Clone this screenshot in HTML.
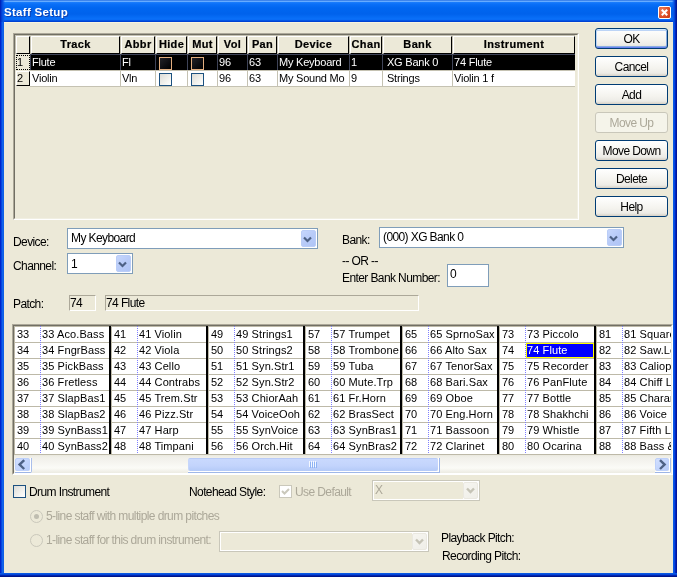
<!DOCTYPE html><html><head><meta charset="utf-8"><style>
*{margin:0;padding:0;box-sizing:border-box}
html,body{width:677px;height:577px;overflow:hidden;background:#ECE9D8}
body{position:relative;-webkit-font-smoothing:antialiased;font-family:"Liberation Sans",sans-serif;font-size:11px;color:#000;letter-spacing:-0.22px}
div{position:absolute}
.t{white-space:nowrap;line-height:13px}
.d{font-size:12px;letter-spacing:-0.6px}
.btn{font-size:12px;letter-spacing:-0.6px;border:1px solid #003C74;border-radius:3px;background:linear-gradient(#FFFFFF 0%,#F4F3EE 60%,#ECEBE6 85%,#D6D0C5 100%);text-align:center;line-height:19px;padding-top:1px}
.btnd{font-size:12px;letter-spacing:-0.6px;border:1px solid #C9C7BA;border-radius:3px;background:#F5F4EA;text-align:center;line-height:19px;padding-top:1px;color:#ACA899}
.combo{border:1px solid #7F9DB9;background:#fff}
.cbtn{border-radius:2px;background:linear-gradient(135deg,#C6D6FC 0%,#B8CBF8 50%,#AFC4F6 100%);border:1px solid #BACDF7}
.chk{border:1px solid #1C5180;background:linear-gradient(135deg,#DCDCD7 0%,#F2F2EE 60%,#FFFFFF 100%)}
.hdr{letter-spacing:0.35px;-webkit-text-stroke:0.2px #000;background:#ECE9D8;border-top:1px solid #fff;border-left:1px solid #fff;border-right:1px solid #000;border-bottom:1px solid #000;font-weight:bold;text-align:center;line-height:15px}
</style></head><body><div style="left:0;top:0;width:677px;height:577px;will-change:transform"><div style="left:0;top:0;width:677px;height:577px;background:#0831D9"></div>
<div style="left:0;top:0;width:677px;height:22px;background:linear-gradient(#3C84EC 0px,#3C84EC 1px,#66ACFF 1px,#66ACFF 2px,#1C7EFC 2px,#0A70F8 4px,#0066F0 8px,#0062EC 14px,#0468F2 16px,#0A70F8 19px,#0868F4 20px,#0044D6 21px,#0040D0 22px)"></div>
<div style="left:0;top:0;width:5px;height:22px;background:linear-gradient(90deg,#0018B0 0px,#0030C8 1px,#0048DC 2px,#0A54E4 3px,rgba(10,90,236,0) 5px)"></div>
<div style="left:672px;top:0;width:5px;height:22px;background:linear-gradient(90deg,rgba(10,90,236,0) 0px,#0A54E4 2px,#0038C8 3px,#0020A8 4px,#00148C 5px)"></div>
<div style="left:0;top:22px;width:4px;height:555px;background:linear-gradient(90deg,#001CC0 0px,#0030D8 1px,#0A5CE8 2px,#166AEE 3px,#0855DD 4px)"></div>
<div style="left:673px;top:22px;width:4px;height:555px;background:linear-gradient(90deg,#0855DD 0px,#0A5CE8 1px,#0030D8 2px,#001AA8 3px,#00138C 4px)"></div>
<div style="left:0;top:573px;width:677px;height:4px;background:linear-gradient(#0855DD 0px,#0A5CE8 1px,#0030C8 2px,#001A98 3px,#00107A 4px)"></div>
<div class="t" style="left:4px;top:4px;font-size:11.5px;font-weight:bold;color:#fff;line-height:16px;letter-spacing:0.3px;text-shadow:1px 1px 0 #1040B0">Staff Setup</div>
<div style="left:658px;top:6px;width:13px;height:13px;border:1px solid #fff;border-radius:2px;background:radial-gradient(circle at 30% 30%,#F0805A,#D8451F 70%,#C4380F)"></div>
<svg style="position:absolute;left:658px;top:6px" width="13" height="13" viewBox="0 0 13 13"><path d="M3.8 3.8 L9.2 9.2 M9.2 3.8 L3.8 9.2" stroke="#fff" stroke-width="2" stroke-linecap="butt"/></svg>
<div style="left:4px;top:22px;width:669px;height:551px;background:#ECE9D8;border-top:1px solid #F8F4E0"></div>
<div class="" style="left:13px;top:33px;width:566px;height:187px;border-top:1px solid #ACA899;border-left:1px solid #ACA899;border-right:1px solid #fff;border-bottom:1px solid #fff"></div>
<div class="" style="left:14px;top:34px;width:564px;height:185px;border-top:1px solid #716F64;border-left:1px solid #716F64;border-right:1px solid #F1EFE2;border-bottom:1px solid #F1EFE2;background:#ECE9D8"></div>
<div class="" style="left:15px;top:35px;width:560px;height:19px;background:#C5C2B2"></div>
<div class="hdr t" style="left:16px;top:36px;width:14px;height:18px;"></div>
<div class="hdr t" style="left:31px;top:36px;width:89px;height:18px;">Track</div>
<div class="hdr t" style="left:121px;top:36px;width:34px;height:18px;">Abbr</div>
<div class="hdr t" style="left:156px;top:36px;width:31px;height:18px;">Hide</div>
<div class="hdr t" style="left:188px;top:36px;width:29px;height:18px;">Mut</div>
<div class="hdr t" style="left:218px;top:36px;width:29px;height:18px;">Vol</div>
<div class="hdr t" style="left:248px;top:36px;width:29px;height:18px;">Pan</div>
<div class="hdr t" style="left:278px;top:36px;width:71px;height:18px;">Device</div>
<div class="hdr t" style="left:350px;top:36px;width:32px;height:18px;">Chan</div>
<div class="hdr t" style="left:383px;top:36px;width:69px;height:18px;">Bank</div>
<div class="hdr t" style="left:453px;top:36px;width:122px;height:18px;">Instrument</div>
<div class="" style="left:16px;top:54px;width:14px;height:16px;background:#ECE9D8"></div>
<div class="" style="left:16px;top:55px;width:14px;height:15px;border:1px dotted #000"></div>
<div class="t" style="left:17px;top:56px;">1</div>
<div class="" style="left:30px;top:54px;width:545px;height:16px;background:#000;border-top:1px solid #3F4458;border-left:1px solid #3F4458"></div>
<div class="t" style="left:32px;top:56px;color:#fff">Flute</div>
<div class="" style="left:120px;top:54px;width:1px;height:16px;background:#3F4458"></div>
<div class="t" style="left:122px;top:56px;color:#fff">Fl</div>
<div class="" style="left:155px;top:54px;width:1px;height:16px;background:#3F4458"></div>
<div class="chk" style="left:159px;top:57px;width:13px;height:13px;border-color:#E3AE7F;background:linear-gradient(135deg,#232328 0%,#0D0D11 60%,#000 100%)"></div>
<div class="" style="left:187px;top:54px;width:1px;height:16px;background:#3F4458"></div>
<div class="chk" style="left:191px;top:57px;width:13px;height:13px;border-color:#E3AE7F;background:linear-gradient(135deg,#232328 0%,#0D0D11 60%,#000 100%)"></div>
<div class="" style="left:217px;top:54px;width:1px;height:16px;background:#3F4458"></div>
<div class="t" style="left:219px;top:56px;color:#fff">96</div>
<div class="" style="left:247px;top:54px;width:1px;height:16px;background:#3F4458"></div>
<div class="t" style="left:249px;top:56px;color:#fff">63</div>
<div class="" style="left:277px;top:54px;width:1px;height:16px;background:#3F4458"></div>
<div class="t" style="left:279px;top:56px;color:#fff">My Keyboard</div>
<div class="" style="left:349px;top:54px;width:1px;height:16px;background:#3F4458"></div>
<div class="t" style="left:351px;top:56px;color:#fff">1</div>
<div class="" style="left:382px;top:54px;width:1px;height:16px;background:#3F4458"></div>
<div class="t" style="left:387px;top:56px;color:#fff">XG Bank 0</div>
<div class="" style="left:452px;top:54px;width:1px;height:16px;background:#3F4458"></div>
<div class="t" style="left:454px;top:56px;color:#fff">74 Flute</div>
<div class="" style="left:16px;top:71px;width:14px;height:15px;background:#ECE9D8;border-top:1px solid #fff;border-left:1px solid #fff;border-right:1px solid #000;border-bottom:1px solid #000"></div>
<div class="t" style="left:17px;top:72px;">2</div>
<div class="" style="left:30px;top:70px;width:545px;height:17px;background:#fff;border-bottom:1px solid #C5C2B2;border-top:1px solid #C5C2B2"></div>
<div class="t" style="left:32px;top:72px;">Violin</div>
<div class="" style="left:120px;top:70px;width:1px;height:17px;background:#C5C2B2"></div>
<div class="t" style="left:122px;top:72px;">Vln</div>
<div class="" style="left:155px;top:70px;width:1px;height:17px;background:#C5C2B2"></div>
<div class="chk" style="left:159px;top:73px;width:13px;height:13px;"></div>
<div class="" style="left:187px;top:70px;width:1px;height:17px;background:#C5C2B2"></div>
<div class="chk" style="left:191px;top:73px;width:13px;height:13px;"></div>
<div class="" style="left:217px;top:70px;width:1px;height:17px;background:#C5C2B2"></div>
<div class="t" style="left:219px;top:72px;">96</div>
<div class="" style="left:247px;top:70px;width:1px;height:17px;background:#C5C2B2"></div>
<div class="t" style="left:249px;top:72px;">63</div>
<div class="" style="left:277px;top:70px;width:1px;height:17px;background:#C5C2B2"></div>
<div class="t" style="left:279px;top:72px;">My Sound Mo</div>
<div class="" style="left:349px;top:70px;width:1px;height:17px;background:#C5C2B2"></div>
<div class="t" style="left:351px;top:72px;">9</div>
<div class="" style="left:382px;top:70px;width:1px;height:17px;background:#C5C2B2"></div>
<div class="t" style="left:387px;top:72px;">Strings</div>
<div class="" style="left:452px;top:70px;width:1px;height:17px;background:#C5C2B2"></div>
<div class="t" style="left:454px;top:72px;">Violin 1 f</div>
<div class="btn t" style="left:595px;top:28px;width:73px;height:21px;box-shadow:inset 0 1px 0 #CEE7FF,inset 0 -1px 0 #6982EE,inset 1px 0 0 #BCD4F6,inset -1px 0 0 #89ADE4,inset 0 2px 0 #BCD4F6,inset 0 -2px 0 #89ADE4">OK</div>
<div class="btn t" style="left:595px;top:56px;width:73px;height:21px;">Cancel</div>
<div class="btn t" style="left:595px;top:84px;width:73px;height:21px;">Add</div>
<div class="btnd t" style="left:595px;top:112px;width:73px;height:21px;">Move Up</div>
<div class="btn t" style="left:595px;top:140px;width:73px;height:21px;">Move Down</div>
<div class="btn t" style="left:595px;top:168px;width:73px;height:21px;">Delete</div>
<div class="btn t" style="left:595px;top:196px;width:73px;height:21px;">Help</div>
<div class="t d" style="left:13px;top:236px;">Device:</div>
<div class="t d" style="left:13px;top:260px;">Channel:</div>
<div class="combo" style="left:67px;top:228px;width:251px;height:21px;"></div>
<div class="cbtn" style="left:301px;top:230px;width:15px;height:17px;"></div>
<svg style="position:absolute;left:303px;top:236px" width="9" height="7" viewBox="0 0 9 7"><path d="M1 1.5 L4.5 5 L8 1.5" fill="none" stroke="#4D6185" stroke-width="2.2"/></svg>
<div class="t d" style="left:71px;top:232px;">My Keyboard</div>
<div class="combo" style="left:67px;top:253px;width:66px;height:21px;"></div>
<div class="cbtn" style="left:116px;top:255px;width:15px;height:17px;"></div>
<svg style="position:absolute;left:118px;top:261px" width="9" height="7" viewBox="0 0 9 7"><path d="M1 1.5 L4.5 5 L8 1.5" fill="none" stroke="#4D6185" stroke-width="2.2"/></svg>
<div class="t d" style="left:71px;top:258px;">1</div>
<div class="t d" style="left:342px;top:234px;">Bank:</div>
<div class="combo" style="left:379px;top:227px;width:245px;height:21px;"></div>
<div class="cbtn" style="left:607px;top:229px;width:15px;height:17px;"></div>
<svg style="position:absolute;left:609px;top:235px" width="9" height="7" viewBox="0 0 9 7"><path d="M1 1.5 L4.5 5 L8 1.5" fill="none" stroke="#4D6185" stroke-width="2.2"/></svg>
<div class="t d" style="left:383px;top:231px;">(000) XG Bank 0</div>
<div class="t d" style="left:342px;top:255px;">-- OR --</div>
<div class="t d" style="left:342px;top:272px;">Enter Bank Number:</div>
<div class="" style="left:447px;top:264px;width:42px;height:23px;border:1px solid #7F9DB9;background:#fff"></div>
<div class="t d" style="left:450px;top:268px;">0</div>
<div class="t d" style="left:13px;top:298px;">Patch:</div>
<div class="" style="left:69px;top:295px;width:27px;height:16px;border-top:1px solid #ACA899;border-left:1px solid #ACA899;border-right:1px solid #fff;border-bottom:1px solid #fff"></div>
<div class="t d" style="left:70px;top:297px;">74</div>
<div class="" style="left:105px;top:295px;width:314px;height:16px;border-top:1px solid #ACA899;border-left:1px solid #ACA899;border-right:1px solid #fff;border-bottom:1px solid #fff"></div>
<div class="t d" style="left:106px;top:297px;">74 Flute</div>
<div class="" style="left:12px;top:324px;width:661px;height:151px;border-top:1px solid #ACA899;border-left:1px solid #ACA899;border-right:1px solid #fff;border-bottom:1px solid #fff"></div>
<div class="" style="left:13px;top:325px;width:659px;height:149px;border-top:1px solid #716F64;border-left:1px solid #716F64;border-right:1px solid #F1EFE2;border-bottom:1px solid #F1EFE2;background:#fff"></div>
<div style="left:14px;top:326px;width:657px;height:129px;overflow:hidden"><div class="" style="left:0px;top:0px;width:658px;height:1px;background:#BDB9A8"></div><div class="" style="left:0px;top:16px;width:658px;height:1px;background:#BDB9A8"></div><div class="" style="left:0px;top:32px;width:658px;height:1px;background:#BDB9A8"></div><div class="" style="left:0px;top:48px;width:658px;height:1px;background:#BDB9A8"></div><div class="" style="left:0px;top:64px;width:658px;height:1px;background:#BDB9A8"></div><div class="" style="left:0px;top:80px;width:658px;height:1px;background:#BDB9A8"></div><div class="" style="left:0px;top:96px;width:658px;height:1px;background:#BDB9A8"></div><div class="" style="left:0px;top:112px;width:658px;height:1px;background:#BDB9A8"></div><div class="" style="left:0px;top:128px;width:658px;height:1px;background:#BDB9A8"></div><div class="" style="left:0px;top:0px;width:1px;height:128px;background:#BDB9A8"></div><div class="t" style="left:3px;top:2px;">33</div><div class="t" style="left:28px;top:2px;width:68px;overflow:hidden;letter-spacing:0.1px">33 Aco.Bass</div><div class="t" style="left:3px;top:18px;">34</div><div class="t" style="left:28px;top:18px;width:68px;overflow:hidden;letter-spacing:0.1px">34 FngrBass</div><div class="t" style="left:3px;top:34px;">35</div><div class="t" style="left:28px;top:34px;width:68px;overflow:hidden;letter-spacing:0.1px">35 PickBass</div><div class="t" style="left:3px;top:50px;">36</div><div class="t" style="left:28px;top:50px;width:68px;overflow:hidden;letter-spacing:0.1px">36 Fretless</div><div class="t" style="left:3px;top:66px;">37</div><div class="t" style="left:28px;top:66px;width:68px;overflow:hidden;letter-spacing:0.1px">37 SlapBas1</div><div class="t" style="left:3px;top:82px;">38</div><div class="t" style="left:28px;top:82px;width:68px;overflow:hidden;letter-spacing:0.1px">38 SlapBas2</div><div class="t" style="left:3px;top:98px;">39</div><div class="t" style="left:28px;top:98px;width:68px;overflow:hidden;letter-spacing:0.1px">39 SynBass1</div><div class="t" style="left:3px;top:114px;">40</div><div class="t" style="left:28px;top:114px;width:68px;overflow:hidden;letter-spacing:0.1px">40 SynBass2</div><div class="" style="left:26px;top:0px;width:1px;height:128px;background:repeating-linear-gradient(#7F7FFF 0px,#7F7FFF 1px,transparent 1px,transparent 2px)"></div><div class="" style="left:95px;top:0px;width:2px;height:128px;background:#000"></div><div class="" style="left:97px;top:0px;width:1px;height:128px;background:#BDB9A8"></div><div class="t" style="left:100px;top:2px;">41</div><div class="t" style="left:125px;top:2px;width:68px;overflow:hidden;letter-spacing:0.1px">41 Violin</div><div class="t" style="left:100px;top:18px;">42</div><div class="t" style="left:125px;top:18px;width:68px;overflow:hidden;letter-spacing:0.1px">42 Viola</div><div class="t" style="left:100px;top:34px;">43</div><div class="t" style="left:125px;top:34px;width:68px;overflow:hidden;letter-spacing:0.1px">43 Cello</div><div class="t" style="left:100px;top:50px;">44</div><div class="t" style="left:125px;top:50px;width:68px;overflow:hidden;letter-spacing:0.1px">44 Contrabs</div><div class="t" style="left:100px;top:66px;">45</div><div class="t" style="left:125px;top:66px;width:68px;overflow:hidden;letter-spacing:0.1px">45 Trem.Str</div><div class="t" style="left:100px;top:82px;">46</div><div class="t" style="left:125px;top:82px;width:68px;overflow:hidden;letter-spacing:0.1px">46 Pizz.Str</div><div class="t" style="left:100px;top:98px;">47</div><div class="t" style="left:125px;top:98px;width:68px;overflow:hidden;letter-spacing:0.1px">47 Harp</div><div class="t" style="left:100px;top:114px;">48</div><div class="t" style="left:125px;top:114px;width:68px;overflow:hidden;letter-spacing:0.1px">48 Timpani</div><div class="" style="left:123px;top:0px;width:1px;height:128px;background:repeating-linear-gradient(#7F7FFF 0px,#7F7FFF 1px,transparent 1px,transparent 2px)"></div><div class="" style="left:192px;top:0px;width:2px;height:128px;background:#000"></div><div class="" style="left:194px;top:0px;width:1px;height:128px;background:#BDB9A8"></div><div class="t" style="left:197px;top:2px;">49</div><div class="t" style="left:222px;top:2px;width:68px;overflow:hidden;letter-spacing:0.1px">49 Strings1</div><div class="t" style="left:197px;top:18px;">50</div><div class="t" style="left:222px;top:18px;width:68px;overflow:hidden;letter-spacing:0.1px">50 Strings2</div><div class="t" style="left:197px;top:34px;">51</div><div class="t" style="left:222px;top:34px;width:68px;overflow:hidden;letter-spacing:0.1px">51 Syn.Str1</div><div class="t" style="left:197px;top:50px;">52</div><div class="t" style="left:222px;top:50px;width:68px;overflow:hidden;letter-spacing:0.1px">52 Syn.Str2</div><div class="t" style="left:197px;top:66px;">53</div><div class="t" style="left:222px;top:66px;width:68px;overflow:hidden;letter-spacing:0.1px">53 ChiorAah</div><div class="t" style="left:197px;top:82px;">54</div><div class="t" style="left:222px;top:82px;width:68px;overflow:hidden;letter-spacing:0.1px">54 VoiceOoh</div><div class="t" style="left:197px;top:98px;">55</div><div class="t" style="left:222px;top:98px;width:68px;overflow:hidden;letter-spacing:0.1px">55 SynVoice</div><div class="t" style="left:197px;top:114px;">56</div><div class="t" style="left:222px;top:114px;width:68px;overflow:hidden;letter-spacing:0.1px">56 Orch.Hit</div><div class="" style="left:220px;top:0px;width:1px;height:128px;background:repeating-linear-gradient(#7F7FFF 0px,#7F7FFF 1px,transparent 1px,transparent 2px)"></div><div class="" style="left:289px;top:0px;width:2px;height:128px;background:#000"></div><div class="" style="left:291px;top:0px;width:1px;height:128px;background:#BDB9A8"></div><div class="t" style="left:294px;top:2px;">57</div><div class="t" style="left:319px;top:2px;width:68px;overflow:hidden;letter-spacing:0.1px">57 Trumpet</div><div class="t" style="left:294px;top:18px;">58</div><div class="t" style="left:319px;top:18px;width:68px;overflow:hidden;letter-spacing:0.1px">58 Trombone</div><div class="t" style="left:294px;top:34px;">59</div><div class="t" style="left:319px;top:34px;width:68px;overflow:hidden;letter-spacing:0.1px">59 Tuba</div><div class="t" style="left:294px;top:50px;">60</div><div class="t" style="left:319px;top:50px;width:68px;overflow:hidden;letter-spacing:0.1px">60 Mute.Trp</div><div class="t" style="left:294px;top:66px;">61</div><div class="t" style="left:319px;top:66px;width:68px;overflow:hidden;letter-spacing:0.1px">61 Fr.Horn</div><div class="t" style="left:294px;top:82px;">62</div><div class="t" style="left:319px;top:82px;width:68px;overflow:hidden;letter-spacing:0.1px">62 BrasSect</div><div class="t" style="left:294px;top:98px;">63</div><div class="t" style="left:319px;top:98px;width:68px;overflow:hidden;letter-spacing:0.1px">63 SynBras1</div><div class="t" style="left:294px;top:114px;">64</div><div class="t" style="left:319px;top:114px;width:68px;overflow:hidden;letter-spacing:0.1px">64 SynBras2</div><div class="" style="left:317px;top:0px;width:1px;height:128px;background:repeating-linear-gradient(#7F7FFF 0px,#7F7FFF 1px,transparent 1px,transparent 2px)"></div><div class="" style="left:386px;top:0px;width:2px;height:128px;background:#000"></div><div class="" style="left:388px;top:0px;width:1px;height:128px;background:#BDB9A8"></div><div class="t" style="left:391px;top:2px;">65</div><div class="t" style="left:416px;top:2px;width:68px;overflow:hidden;letter-spacing:0.1px">65 SprnoSax</div><div class="t" style="left:391px;top:18px;">66</div><div class="t" style="left:416px;top:18px;width:68px;overflow:hidden;letter-spacing:0.1px">66 Alto Sax</div><div class="t" style="left:391px;top:34px;">67</div><div class="t" style="left:416px;top:34px;width:68px;overflow:hidden;letter-spacing:0.1px">67 TenorSax</div><div class="t" style="left:391px;top:50px;">68</div><div class="t" style="left:416px;top:50px;width:68px;overflow:hidden;letter-spacing:0.1px">68 Bari.Sax</div><div class="t" style="left:391px;top:66px;">69</div><div class="t" style="left:416px;top:66px;width:68px;overflow:hidden;letter-spacing:0.1px">69 Oboe</div><div class="t" style="left:391px;top:82px;">70</div><div class="t" style="left:416px;top:82px;width:68px;overflow:hidden;letter-spacing:0.1px">70 Eng.Horn</div><div class="t" style="left:391px;top:98px;">71</div><div class="t" style="left:416px;top:98px;width:68px;overflow:hidden;letter-spacing:0.1px">71 Bassoon</div><div class="t" style="left:391px;top:114px;">72</div><div class="t" style="left:416px;top:114px;width:68px;overflow:hidden;letter-spacing:0.1px">72 Clarinet</div><div class="" style="left:414px;top:0px;width:1px;height:128px;background:repeating-linear-gradient(#7F7FFF 0px,#7F7FFF 1px,transparent 1px,transparent 2px)"></div><div class="" style="left:483px;top:0px;width:2px;height:128px;background:#000"></div><div class="" style="left:485px;top:0px;width:1px;height:128px;background:#BDB9A8"></div><div class="t" style="left:488px;top:2px;">73</div><div class="t" style="left:513px;top:2px;width:68px;overflow:hidden;letter-spacing:0.1px">73 Piccolo</div><div class="t" style="left:488px;top:18px;">74</div><div class="" style="left:512px;top:17px;width:68px;height:15px;background:#0000FF;border:1px solid #FFFF00"></div><div class="t" style="left:513px;top:18px;color:#fff;letter-spacing:0.1px">74 Flute</div><div class="t" style="left:488px;top:34px;">75</div><div class="t" style="left:513px;top:34px;width:68px;overflow:hidden;letter-spacing:0.1px">75 Recorder</div><div class="t" style="left:488px;top:50px;">76</div><div class="t" style="left:513px;top:50px;width:68px;overflow:hidden;letter-spacing:0.1px">76 PanFlute</div><div class="t" style="left:488px;top:66px;">77</div><div class="t" style="left:513px;top:66px;width:68px;overflow:hidden;letter-spacing:0.1px">77 Bottle</div><div class="t" style="left:488px;top:82px;">78</div><div class="t" style="left:513px;top:82px;width:68px;overflow:hidden;letter-spacing:0.1px">78 Shakhchi</div><div class="t" style="left:488px;top:98px;">79</div><div class="t" style="left:513px;top:98px;width:68px;overflow:hidden;letter-spacing:0.1px">79 Whistle</div><div class="t" style="left:488px;top:114px;">80</div><div class="t" style="left:513px;top:114px;width:68px;overflow:hidden;letter-spacing:0.1px">80 Ocarina</div><div class="" style="left:511px;top:0px;width:1px;height:128px;background:repeating-linear-gradient(#7F7FFF 0px,#7F7FFF 1px,transparent 1px,transparent 2px)"></div><div class="" style="left:580px;top:0px;width:2px;height:128px;background:#000"></div><div class="" style="left:582px;top:0px;width:1px;height:128px;background:#BDB9A8"></div><div class="t" style="left:585px;top:2px;">81</div><div class="t" style="left:610px;top:2px;width:68px;overflow:hidden;letter-spacing:0.1px">81 Square Ld</div><div class="t" style="left:585px;top:18px;">82</div><div class="t" style="left:610px;top:18px;width:68px;overflow:hidden;letter-spacing:0.1px">82 Saw.Lead</div><div class="t" style="left:585px;top:34px;">83</div><div class="t" style="left:610px;top:34px;width:68px;overflow:hidden;letter-spacing:0.1px">83 CaliopLd</div><div class="t" style="left:585px;top:50px;">84</div><div class="t" style="left:610px;top:50px;width:68px;overflow:hidden;letter-spacing:0.1px">84 Chiff Ld</div><div class="t" style="left:585px;top:66px;">85</div><div class="t" style="left:610px;top:66px;width:68px;overflow:hidden;letter-spacing:0.1px">85 Charang</div><div class="t" style="left:585px;top:82px;">86</div><div class="t" style="left:610px;top:82px;width:68px;overflow:hidden;letter-spacing:0.1px">86 Voice</div><div class="t" style="left:585px;top:98px;">87</div><div class="t" style="left:610px;top:98px;width:68px;overflow:hidden;letter-spacing:0.1px">87 Fifth Ld</div><div class="t" style="left:585px;top:114px;">88</div><div class="t" style="left:610px;top:114px;width:68px;overflow:hidden;letter-spacing:0.1px">88 Bass & Ld</div><div class="" style="left:608px;top:0px;width:1px;height:128px;background:repeating-linear-gradient(#7F7FFF 0px,#7F7FFF 1px,transparent 1px,transparent 2px)"></div><div class="" style="left:677px;top:0px;width:2px;height:128px;background:#000"></div></div>
<div class="" style="left:14px;top:455px;width:657px;height:18px;background:linear-gradient(#EAE8DE 0px,#F0EFE8 2px,#F4F3EE 6px,#FBFBF7 13px,#F2F1EA 16px,#ECEBE2 18px)"></div>
<div class="" style="left:14px;top:473px;width:657px;height:1px;background:#fff"></div>
<div class="" style="left:15px;top:458px;width:17px;height:15px;border-right:1px solid #A9BEEB;border-bottom:1px solid #9DB5E6;border-radius:0 0 2px 0"></div>
<div class="" style="left:15px;top:458px;width:16px;height:14px;border-right:1px solid #fff;border-bottom:1px solid #fff"></div>
<div class="" style="left:15px;top:458px;width:15px;height:13px;border-radius:2px;background:linear-gradient(135deg,#D3E0FF 0%,#C6D7FD 40%,#B6CBF8 100%);border:1px solid #BDD0FA"></div>
<svg style="position:absolute;left:15px;top:458px" width="15" height="13" viewBox="0 0 15 13"><path d="M9.2 2.2 L4.6 6.6 L9.2 11" fill="none" stroke="#4D6185" stroke-width="2.4" stroke-linejoin="miter"/></svg>
<div class="" style="left:655px;top:458px;width:16px;height:15px;border-right:1px solid #A9BEEB;border-bottom:1px solid #9DB5E6;border-radius:0 0 2px 0"></div>
<div class="" style="left:655px;top:458px;width:15px;height:14px;border-right:1px solid #fff;border-bottom:1px solid #fff"></div>
<div class="" style="left:655px;top:458px;width:14px;height:13px;border-radius:2px;background:linear-gradient(135deg,#D3E0FF 0%,#C6D7FD 40%,#B6CBF8 100%);border:1px solid #BDD0FA"></div>
<svg style="position:absolute;left:655px;top:458px" width="15" height="13" viewBox="0 0 15 13"><path d="M5 2.2 L9.6 6.6 L5 11" fill="none" stroke="#4D6185" stroke-width="2.4" stroke-linejoin="miter"/></svg>
<div class="" style="left:188px;top:458px;width:252px;height:15px;border-right:1px solid #9FB7E8;border-bottom:1px solid #9FB7E8"></div>
<div class="" style="left:188px;top:458px;width:251px;height:14px;border-right:1px solid #fff;border-bottom:1px solid #fff"></div>
<div class="" style="left:188px;top:458px;width:250px;height:13px;border-radius:2px;background:linear-gradient(#C9D9FE,#C3D4FC 55%,#B4CAF8);border-top:1px solid #B9CBF6;border-left:1px solid #C6D6FB"></div>
<svg style="position:absolute;left:308px;top:460px" width="10" height="9" viewBox="0 0 10 9"><path d="M1.5 1V7M3.5 1V7M5.5 1V7M7.5 1V7" stroke="#F4F8FF" stroke-width="1"/><path d="M2.5 2V8M4.5 2V8M6.5 2V8M8.5 2V8" stroke="#8DB2F4" stroke-width="1"/></svg>
<div class="chk" style="left:13px;top:485px;width:13px;height:13px;"></div>
<div class="t d" style="left:29px;top:486px;">Drum Instrument</div>
<div class="t d" style="left:189px;top:486px;">Notehead Style:</div>
<div class="" style="left:279px;top:485px;width:13px;height:13px;border:1px solid #CAC8BB;background:#fff"></div>
<svg style="position:absolute;left:279px;top:485px" width="13" height="13" viewBox="0 0 13 13"><path d="M3 6 L5.5 8.5 L10 4" fill="none" stroke="#CAC8BB" stroke-width="2"/></svg>
<div class="t d" style="left:295px;top:486px;color:#ACA899">Use Default</div>
<div class="" style="left:372px;top:480px;width:108px;height:21px;border:1px solid #C9C7BA;background:#fff"></div>
<div class="" style="left:374px;top:482px;width:89px;height:17px;background:#ECE9D8"></div>
<div class="" style="left:463px;top:482px;width:15px;height:17px;background:linear-gradient(135deg,#F6F5F0,#EFEEE8);border:1px solid #EAE8E0;border-radius:2px"></div>
<svg style="position:absolute;left:466px;top:487px" width="9" height="7" viewBox="0 0 9 7"><path d="M1 1.5 L4.5 5 L8 1.5" fill="none" stroke="#C5C3B6" stroke-width="2.4"/></svg>
<div class="t d" style="left:375px;top:484px;color:#ACA899">X</div>
<div class="" style="left:30px;top:510px;width:13px;height:13px;border:1px solid #CAC8BB;border-radius:50%;background:#ECE9D8"></div>
<div class="" style="left:34px;top:514px;width:5px;height:5px;border-radius:50%;background:#BFBDB0"></div>
<div class="t d" style="left:46px;top:510px;color:#ACA899">5-line staff with multiple drum pitches</div>
<div class="" style="left:30px;top:534px;width:13px;height:13px;border:1px solid #CAC8BB;border-radius:50%;background:#ECE9D8"></div>
<div class="t d" style="left:46px;top:534px;color:#ACA899">1-line staff for this drum instrument:</div>
<div class="" style="left:219px;top:531px;width:210px;height:21px;border:1px solid #C9C7BA;background:#fff"></div>
<div class="" style="left:221px;top:533px;width:191px;height:17px;background:#ECE9D8"></div>
<div class="" style="left:412px;top:533px;width:15px;height:17px;background:linear-gradient(135deg,#F6F5F0,#EFEEE8);border:1px solid #EAE8E0;border-radius:2px"></div>
<svg style="position:absolute;left:415px;top:538px" width="9" height="7" viewBox="0 0 9 7"><path d="M1 1.5 L4.5 5 L8 1.5" fill="none" stroke="#C5C3B6" stroke-width="2.4"/></svg>
<div class="t d" style="left:441px;top:532px;">Playback Pitch:</div>
<div class="t d" style="left:442px;top:550px;">Recording Pitch:</div></div></body></html>
